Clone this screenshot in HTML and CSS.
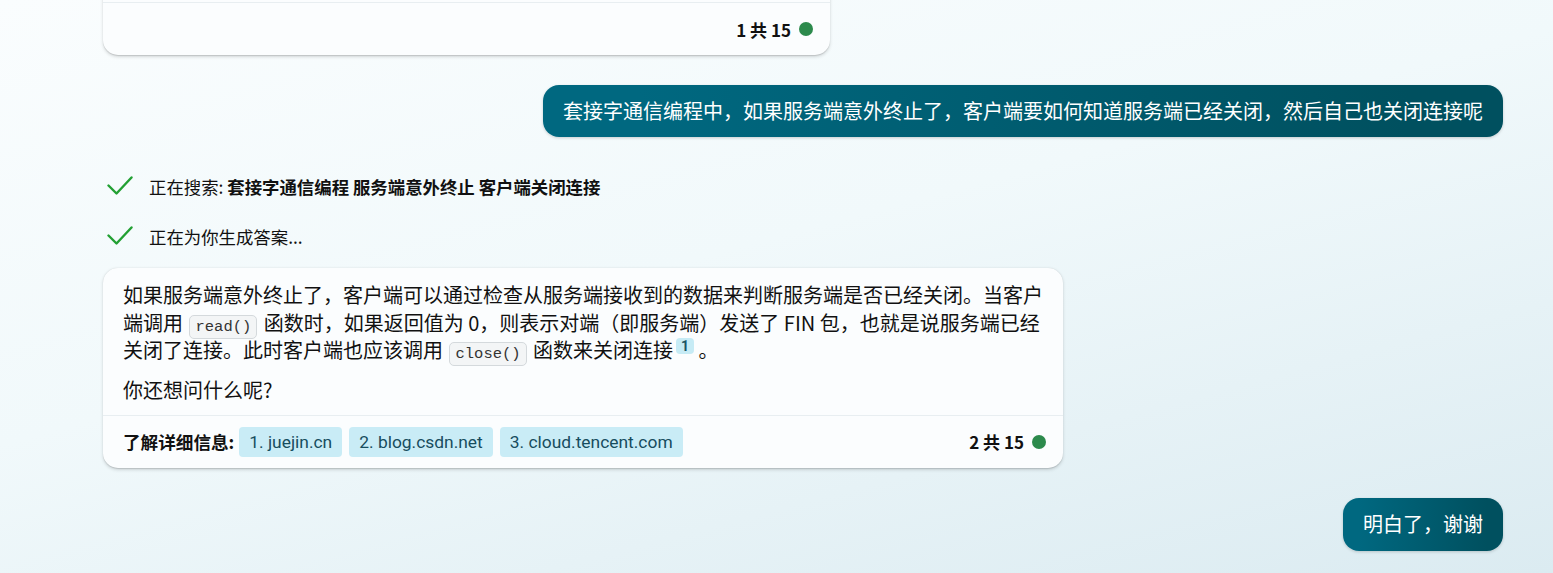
FILE: index.html
```html
<!DOCTYPE html>
<html lang="zh-CN">
<head>
<meta charset="utf-8">
<title>Chat</title>
<link rel="stylesheet" href="styles.css">
</head>
<body>
<main class="chat">
  <section class="card card-top">
    <div class="card-hidden"></div>
    <div class="card-footer footer-end">
      <div class="count"><span>1 共 15</span><span class="dot"></span></div>
    </div>
  </section>

  <div class="user-row">
    <div class="bubble">套接字通信编程中，如果服务端意外终止了，客户端要如何知道服务端已经关闭，然后自己也关闭连接呢</div>
  </div>

  <div class="status status-first">
    <svg class="check" width="26" height="20" viewBox="0 0 26 20"><path d="M1.5 9.5 L9.5 17.5 L24.5 1.5" fill="none" stroke="#22a033" stroke-width="2.4" stroke-linecap="round" stroke-linejoin="round"/></svg>
    <span>正在搜索: <b>套接字通信编程 服务端意外终止 客户端关闭连接</b></span>
  </div>
  <div class="status">
    <svg class="check" width="26" height="20" viewBox="0 0 26 20"><path d="M1.5 9.5 L9.5 17.5 L24.5 1.5" fill="none" stroke="#22a033" stroke-width="2.4" stroke-linecap="round" stroke-linejoin="round"/></svg>
    <span>正在为你生成答案...</span>
  </div>

  <section class="card card-answer">
    <div class="card-body">
      <p>如果服务端意外终止了，客户端可以通过检查从服务端接收到的数据来判断服务端是否已经关闭。当客户端调用 <code>read()</code> 函数时，如果返回值为 0，则表示对端（即服务端）发送了 FIN 包，也就是说服务端已经关闭了连接。此时客户端也应该调用 <code>close()</code> 函数来关闭连接<span class="sup">1</span> 。</p>
      <p>你还想问什么呢?</p>
    </div>
    <div class="card-footer">
      <div class="learn">
        <span class="learn-label">了解详细信息:</span>
        <span class="chip">1. juejin.cn</span>
        <span class="chip">2. blog.csdn.net</span>
        <span class="chip">3. cloud.tencent.com</span>
      </div>
      <div class="count"><span>2 共 15</span><span class="dot"></span></div>
    </div>
  </section>

  <div class="user-row user-row-last">
    <div class="bubble">明白了，谢谢</div>
  </div>
</main>
</body>
</html>
```

FILE: styles.css
```css
html, body {
  margin: 0;
  height: 100%;
}
body {
  overflow: hidden;
  background: linear-gradient(165deg, #fafdfe 0%, #f1f9fb 45%, #dbebf1 100%);
  font-family: "Noto Sans CJK SC", "Noto Sans", sans-serif;
  color: #111;
}
.chat {
  display: flex;
  flex-direction: column;
  padding: 0 50px 0 103px;
}
.card {
  background: #fbfdfe;
  border-radius: 15px;
  box-shadow: 0 0.3px 1px rgba(0, 0, 0, 0.12), 0 1.6px 3.6px rgba(0, 0, 0, 0.14);
  overflow: hidden;
}
.card-top {
  width: 727px;
  margin-top: -58px;
}
.card-hidden {
  height: 60px;
}
.card-footer {
  height: 52px;
  border-top: 1px solid #e8eef1;
  display: flex;
  align-items: center;
  justify-content: space-between;
  padding: 0 17px 0 20px;
}
.footer-end {
  justify-content: flex-end;
}
.count {
  display: flex;
  align-items: center;
  gap: 8px;
  font-size: 17px;
  font-weight: 700;
  color: #111;
}
.dot {
  width: 14px;
  height: 14px;
  border-radius: 50%;
  background: #2c8a4c;
}
.user-row {
  display: flex;
  justify-content: flex-end;
  margin-top: 30px;
}
.bubble {
  white-space: nowrap;
  padding: 12px 20px;
  line-height: 28px;
  font-size: 20px;
  color: #fff;
  border-radius: 16px;
  background: linear-gradient(90deg, #006880 10%, #00505f 90%);
  box-shadow: 0 1px 3px rgba(0, 0, 0, 0.18);
}
.user-row-last .bubble {
  padding: 12px 20px 13px;
}
.status {
  display: flex;
  align-items: center;
  gap: 16px;
  height: 30px;
  margin-top: 20px;
  padding-left: 4px;
  font-size: 17.4px;
  color: #111;
}
.status-first {
  margin-top: 34px;
}
.status b {
  font-weight: 700;
}
.check {
  flex: none;
}
.card-answer {
  width: 960px;
  margin-top: 17px;
}
.card-body {
  padding: 13px 14px 11px 20px;
  font-size: 20px;
  line-height: 27.5px;
}
.card-body p {
  margin: 0;
}
.card-body p + p {
  margin-top: 12.5px;
}
code {
  font-family: "Liberation Mono", "DejaVu Sans Mono", monospace;
  font-size: 15.5px;
  line-height: 1;
  color: #333;
  background: #f3f5f6;
  border: 1px solid #d4d9dc;
  border-radius: 5px;
  padding: 2px 5px;
  margin: 0 2px;
}
.sup {
  display: inline-block;
  font-family: Roboto, "Noto Sans", sans-serif;
  font-size: 14px;
  font-weight: 700;
  line-height: 16px;
  padding: 0 5px;
  margin-left: 3px;
  border-radius: 4px;
  background: #c6ebf5;
  color: #1b5565;
  vertical-align: 7px;
}
.learn {
  display: flex;
  align-items: center;
  gap: 7px;
}
.learn-label {
  font-size: 17.6px;
  font-weight: 700;
  margin-right: -2px;
}
.chip {
  height: 30px;
  display: flex;
  align-items: center;
  padding: 0 10px;
  border-radius: 4px;
  background: #c9ecf6;
  color: #174d5e;
  font-family: Roboto, "Noto Sans", sans-serif;
  font-size: 17.4px;
}
```
